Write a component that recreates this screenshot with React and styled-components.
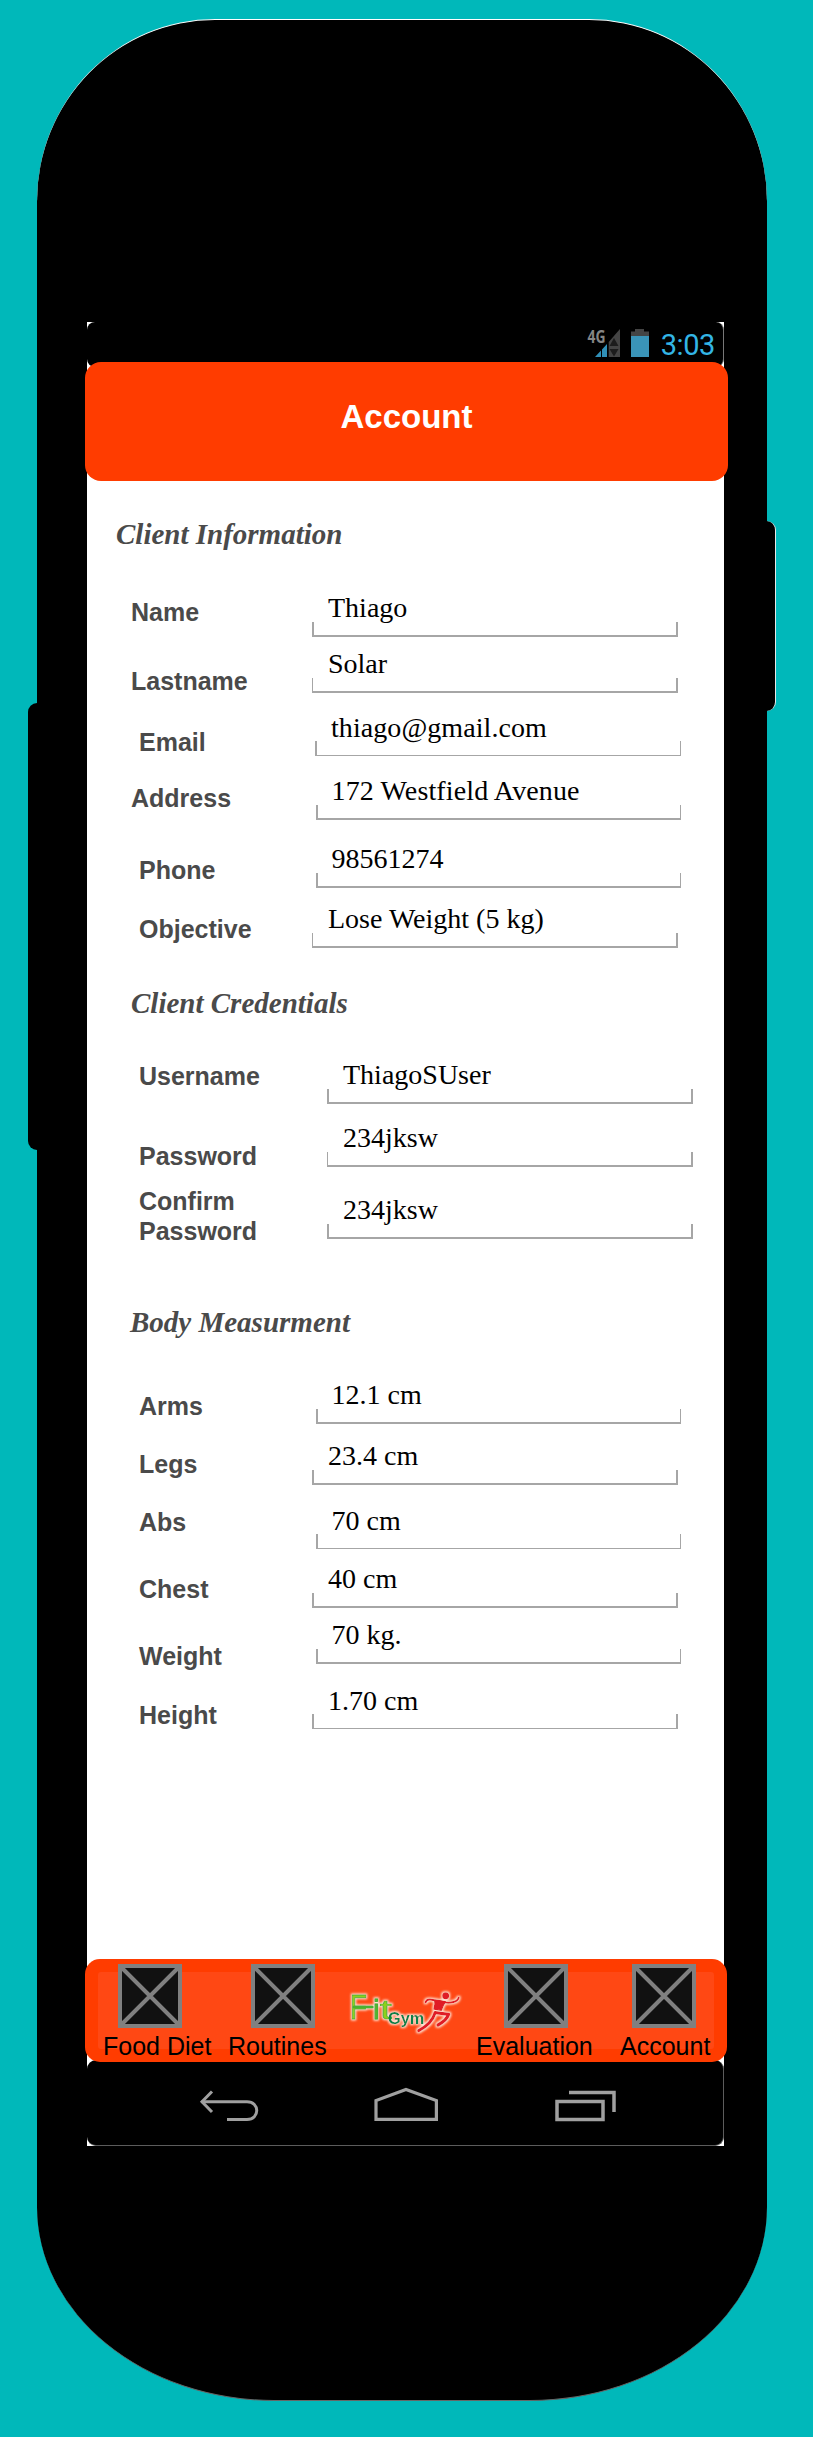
import React from "react";
import styled, { createGlobalStyle } from "styled-components";

const GlobalStyle = createGlobalStyle`
  * { box-sizing: border-box; }
  body { margin: 0; background: #00b8ba; }
`;

const sans = `"Liberation Sans", Arial, sans-serif`;
const serif = `"Liberation Serif", "Times New Roman", serif`;

const Page = styled.div`
  display: flex;
  align-items: flex-start;
  width: 813px;
  height: 2437px;
  padding: 19px 0 0 28px;
  background: #00b8ba;
  overflow: hidden;
`;

const SideKey = styled.div`
  flex: none;
  width: 9px;
  height: ${(p) => p.$height}px;
  margin-top: ${(p) => p.$top}px;
  background: #000;
  border-radius: ${(p) => (p.$side === "left" ? "9px 0 0 9px" : "0 9px 9px 0")};
  border-right: ${(p) => (p.$side === "right" ? "1px solid #e6e6e6" : "0")};
`;

const Device = styled.div`
  flex: none;
  width: 730px;
  height: 2382px;
  padding: 302px 0 0 50px;
  background: #000;
  border-top: 1px solid #fff;
  border-bottom: 1px solid #666;
  border-radius: 178px 178px 237px 237px / 182px 182px 194px 194px;
`;

const Screen = styled.main`
  display: flex;
  flex-direction: column;
  width: 637px;
  height: 1824px;
  background: #fff;
`;

const StatusBar = styled.div`
  display: flex;
  flex: none;
  height: 45px;
  padding: 6px 8px 0 0;
  justify-content: flex-end;
  align-items: flex-start;
  background: #000;
  border-right: 1px solid #777;
  border-radius: 8px;
`;

const StatusIcons = styled.svg`
  flex: none;
  display: block;
  width: 65px;
  height: 30px;
  overflow: visible;
`;

const Clock = styled.span`
  margin-left: 11px;
  font: 400 29px/35px Roboto, sans-serif;
  letter-spacing: -0.4px;
  color: #33b5e5;
`;

const Header = styled.header`
  position: relative;
  flex: none;
  height: 119px;
  margin: -5px -4px 0 -2px;
  padding: 36px 0 0 0;
  background: #ff3c00;
  border-radius: 16px;
  text-align: center;
`;

const Title = styled.h1`
  margin: 0;
  font: bold 33px/38px ${sans};
  color: #fff;
`;

const Form = styled.div`
  flex: 1;
  min-height: 0;
`;

const Heading = styled.h2`
  margin: ${(p) => p.$space}px 0 0 ${(p) => p.$indent}px;
  font: italic bold 29px/34px ${serif};
  color: #4a4a4a;
`;

const Row = styled.div`
  display: flex;
  align-items: flex-end;
  height: ${(p) => p.$height}px;
`;

const Label = styled.label`
  flex: none;
  width: ${(p) => p.$width}px;
  margin-bottom: ${(p) => p.$drop - 6}px;
  padding-left: ${(p) => p.$indent}px;
  font: bold 25px/30px ${sans};
  color: #4a4a4a;
  white-space: pre-line;
`;

const Field = styled.div`
  flex: none;
  width: ${(p) => p.$width}px;
`;

const Value = styled.div`
  margin-bottom: ${(p) => (p.$thin ? -3 : -2)}px;
  padding-left: ${(p) => p.$inset}px;
  font: 28px/32px ${serif};
  letter-spacing: ${(p) => p.$tracking}px;
  color: #000;
  white-space: nowrap;
`;

const Underline = styled.div`
  height: 15px;
  border: solid #a6a6a6;
  border-width: 0 ${(p) => p.$right}px ${(p) => p.$bottom}px ${(p) => p.$left}px;
`;

const TabBar = styled.nav`
  position: relative;
  display: flex;
  flex: none;
  height: 103px;
  margin: 0 -3px 0 -2px;
  padding: 13px;
  background: #ff3c00;
  border-radius: 15px;
`;

const TabPanel = styled.div`
  display: flex;
  width: 616px;
  height: 77px;
  padding-left: 5px;
  background: #ff4814;
  border-radius: 3px;
`;

const Tab = styled.div`
  flex: none;
  width: ${(p) => p.$width}px;
  margin-top: -8px;
`;

const TabIcon = styled.svg`
  display: block;
  width: 64px;
  height: 64px;
  margin-left: ${(p) => p.$inset}px;
`;

const TabLabel = styled.div`
  margin-top: 4px;
  font: 25px/29px ${sans};
  color: #000;
  white-space: nowrap;
`;

const LogoSlot = styled.svg`
  flex: none;
  display: block;
  width: 126px;
  height: 64px;
  margin-top: 8px;
`;

const NavBar = styled.div`
  display: flex;
  flex: none;
  height: 86px;
  margin-top: -2px;
  padding: 27px 0 0 112px;
  background: #000;
  border: solid #5c5c5c;
  border-width: 0 1px 1px 0;
  border-radius: 9px;
`;

const NavIcon = styled.svg`
  flex: none;
  display: block;
  margin-right: 114px;
  fill: none;
  stroke: #a0a0a0;
`;

const client = [
  { label: "Name", value: "Thiago", h: 86, at: 312, drop: 16, indent: 44 },
  { label: "Lastname", value: "Solar", h: 56, at: 312, drop: 3, indent: 44, left: 1 },
  { label: "Email", value: "thiago@gmail.com", h: 63, at: 315, drop: 5, bottom: 1, right: 1, tracking: 0.07 },
  { label: "Address", value: "172 Westfield Avenue", h: 64, at: 316, drop: 13, indent: 44, right: 1, tracking: 0.13 },
  { label: "Phone", value: "98561274", h: 68, at: 316, drop: 9, right: 1 },
  { label: "Objective", value: "Lose Weight (5 kg)", h: 60, at: 312, drop: 10, left: 1 },
];

const credentials = [
  { label: "Username", value: "ThiagoSUser", h: 84, at: 327, drop: 19 },
  { label: "Password", value: "234jksw", h: 63, at: 327, drop: 2, left: 1 },
  { label: "Confirm\nPassword", value: "234jksw", h: 72, at: 327, drop: -1 },
];

const body = [
  { label: "Arms", value: "12.1 cm", h: 85, at: 316, drop: 9, right: 1 },
  { label: "Legs", value: "23.4 cm", h: 61, at: 312, drop: 12 },
  { label: "Abs", value: "70 cm", h: 64, at: 316, drop: 18, bottom: 1, right: 1 },
  { label: "Chest", value: "40 cm", h: 59, at: 312, drop: 10 },
  { label: "Weight", value: "70 kg.", h: 56, at: 316, drop: -1, right: 1 },
  { label: "Height", value: "1.70 cm", h: 65, at: 312, drop: 5, bottom: 1 },
];

function FieldRows({ rows }) {
  return rows.map((r) => (
    <Row key={r.label} $height={r.h}>
      <Label $width={r.at - 87} $drop={r.drop} $indent={r.indent ?? 52}>
        {r.label}
      </Label>
      <Field $width={r.right === 1 ? 681 - r.at : 366}>
        <Value $thin={r.bottom === 1} $inset={r.at === 316 ? 15.5 : 16} $tracking={r.tracking ?? 0}>
          {r.value}
        </Value>
        <Underline $left={r.left ?? 2} $right={r.right ?? 2} $bottom={r.bottom ?? 2} />
      </Field>
    </Row>
  ));
}

function SignalIcon() {
  return (
    <StatusIcons viewBox="584 328 65 30">
      <text x="586.5" y="342.6" fontFamily="Open Sans, sans-serif" fontWeight="700" fontSize="17" fill="#858585" textLength="18" lengthAdjust="spacingAndGlyphs">4G</text>
      <path d="M594 357L600 350.5V357Z M601 357V349.5L606 344V357Z" fill="#3090b8" />
      <path d="M607.7 357V342L619 329V357Z" fill="#444" />
      <path d="M608.5 346L613 338L617.5 346Z M608.5 349L613 356.5L617.5 349Z" fill="#1c1c1c" />
      <path d="M630 336V331.5H634V329H643V331.5H648V336Z" fill="#444" />
      <rect x="630" y="336" width="18" height="21" fill="#3a94b8" />
    </StatusIcons>
  );
}

function PlaceholderIcon({ inset }) {
  return (
    <TabIcon viewBox="0 0 64 64" $inset={inset}>
      <rect x="2" y="2" width="60" height="60" fill="#111" stroke="#808080" strokeWidth="4" />
      <path d="M4 4L60 60M60 4L4 60" stroke="#808080" strokeWidth="4" />
    </TabIcon>
  );
}

function Wordmark() {
  return (
    <>
      <text transform="translate(60 147) scale(0.8 1)" fontSize="104" strokeWidth="3">F</text>
      <path d="M72 111H127" strokeWidth="9" strokeLinecap="round" fill="none" />
      <text x="130" y="147" fontSize="82" strokeWidth="4">i</text>
      <text transform="translate(149 147) scale(1.6 1)" fontSize="82" strokeWidth="2">t</text>
    </>
  );
}

function Runner() {
  return (
    <>
      <circle cx="347" cy="77" r="10.5" stroke="none" fill="#e01e26" />
      <path d="M287 97Q290 87 304 89L334 94Q352 101 370 96Q383 93 386 83" strokeWidth="6" />
      <path d="M314 91L346 95Q339 106 334 121L312 117Q317 103 314 91Z" strokeWidth="4" fill="#e01e26" />
      <path d="M316 128L356 133Q350 151 324 165" strokeWidth="10" />
      <path d="M315 129Q306 160 266 182" strokeWidth="9" />
    </>
  );
}

function Logo() {
  return (
    <LogoSlot viewBox="60 30 378 192" overflow="visible">
      <defs>
        <linearGradient id="leaf" gradientUnits="userSpaceOnUse" x1="62" y1="0" x2="190" y2="0">
          <stop offset="0" stopColor="#8fd01c" />
          <stop offset="0.45" stopColor="#28a03c" />
          <stop offset="0.55" stopColor="#62ba2c" />
          <stop offset="1" stopColor="#159447" />
        </linearGradient>
        <filter id="halo" x="-20%" y="-20%" width="140%" height="140%">
          <feMorphology in="SourceAlpha" operator="dilate" radius="3" />
          <feGaussianBlur stdDeviation="3" result="glow" />
          <feFlood floodColor="#ffe6d8" />
          <feComposite in2="glow" operator="in" result="tint" />
          <feMerge>
            <feMergeNode in="tint" />
            <feMergeNode in="SourceGraphic" />
          </feMerge>
        </filter>
      </defs>
      <g filter="url(#halo)" fontFamily="Liberation Sans, sans-serif">
        <g fill="url(#leaf)" stroke="#4cb030" strokeLinejoin="round">
          <Wordmark />
        </g>
        <text x="174" y="162" fontSize="49" fontWeight="700" fill="#0e8048">Gym</text>
        <g fill="none" stroke="#e01e26" strokeLinecap="round" strokeLinejoin="round">
          <Runner />
        </g>
      </g>
    </LogoSlot>
  );
}

export default function App() {
  return (
    <Page>
      <GlobalStyle />
      <SideKey $side="left" $top={684} $height={447} />
      <Device>
        <Screen>
          <StatusBar>
            <SignalIcon />
            <Clock>3:03</Clock>
          </StatusBar>
          <Header>
            <Title>Account</Title>
          </Header>
          <Form>
            <Heading $space={36} $indent={29}>Client Information</Heading>
            <FieldRows rows={client} />
            <Heading $space={38} $indent={44}>Client Credentials</Heading>
            <FieldRows rows={credentials} />
            <Heading $space={66} $indent={43}>Body Measurment</Heading>
            <FieldRows rows={body} />
          </Form>
          <TabBar>
            <TabPanel>
              <Tab $width={125}>
                <PlaceholderIcon inset={15} />
                <TabLabel>Food Diet</TabLabel>
              </Tab>
              <Tab $width={122}>
                <PlaceholderIcon inset={23} />
                <TabLabel>Routines</TabLabel>
              </Tab>
              <Logo />
              <Tab $width={144}>
                <PlaceholderIcon inset={28} />
                <TabLabel>Evaluation</TabLabel>
              </Tab>
              <Tab $width={92}>
                <PlaceholderIcon inset={12} />
                <TabLabel>Account</TabLabel>
              </Tab>
            </TabPanel>
          </TabBar>
          <NavBar>
            <NavIcon width="60" height="36" strokeWidth="3">
              <path d="M2.5 14.7H48C61 14.7 61 32.5 48 32.5H28" />
              <path d="M13 4.5L3 14.7L13 25" />
            </NavIcon>
            <NavIcon width="66" height="36" strokeWidth="3.2">
              <path d="M3 32.4V13.5L33 2.5L63.4 13.5V32.4Z" />
            </NavIcon>
            <NavIcon width="64" height="36">
              <path d="M4 14.5H50V32.5H4Z" strokeWidth="3.5" />
              <path d="M16 5.5H61V25" strokeWidth="3.5" />
            </NavIcon>
          </NavBar>
        </Screen>
      </Device>
      <SideKey $side="right" $top={502} $height={190} />
    </Page>
  );
}
